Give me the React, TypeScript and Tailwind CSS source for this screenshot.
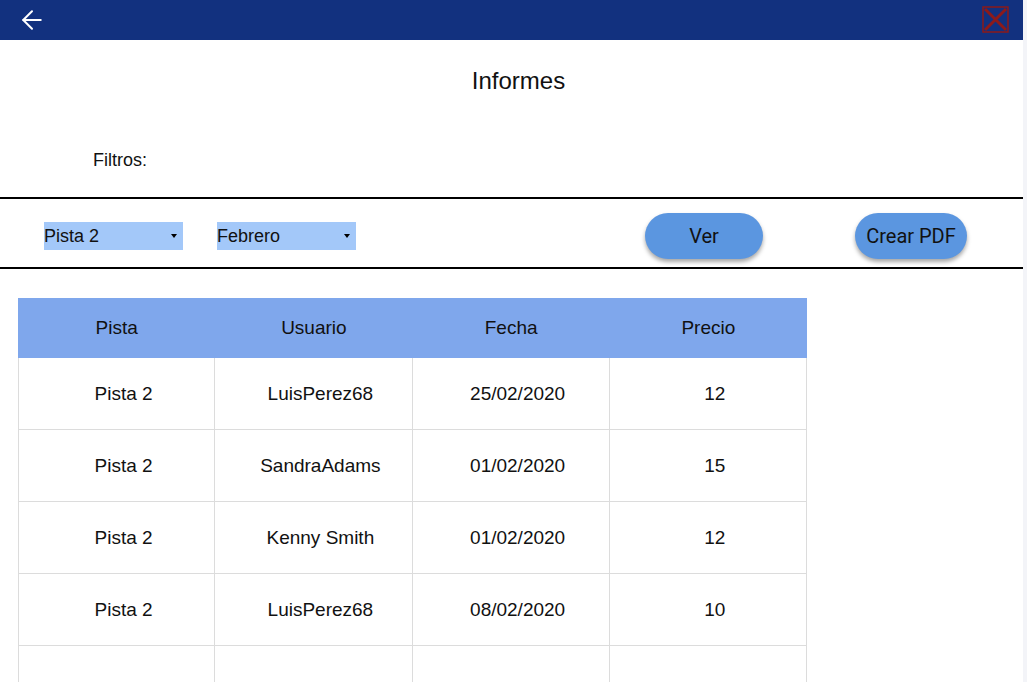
import { ArrowLeft } from "lucide-react"

type Row = { pista: string; usuario: string; fecha: string; precio: string }

const rows: Row[] = [
  { pista: "Pista 2", usuario: "LuisPerez68", fecha: "25/02/2020", precio: "12" },
  { pista: "Pista 2", usuario: "SandraAdams", fecha: "01/02/2020", precio: "15" },
  { pista: "Pista 2", usuario: "Kenny Smith", fecha: "01/02/2020", precio: "12" },
  { pista: "Pista 2", usuario: "LuisPerez68", fecha: "08/02/2020", precio: "10" },
  { pista: "", usuario: "", fecha: "", precio: "" },
]

function Dropdown({ label }: { label: string }) {
  return (
    <div className="flex items-center justify-between w-[139px] h-[28px] bg-[#a3c8f9] pr-[6px] text-[18px] text-[#111]">
      <span>{label}</span>
      <span className="w-0 h-0 border-l-[3px] border-r-[3px] border-t-[4px] border-l-transparent border-r-transparent border-t-black" />
    </div>
  )
}

function CloseIcon() {
  return (
    <svg width="28" height="28" viewBox="0 0 28 28" fill="none">
      <rect x="1" y="1" width="25" height="25" stroke="#8c1a1a" strokeWidth="1.5" />
      <path d="M3 3 L24 24 M24 3 L3 24" stroke="#8c1a1a" strokeWidth="3" />
    </svg>
  )
}

export default function App() {
  return (
    <div className="flex w-[1027px] h-[682px] overflow-hidden bg-white font-['Liberation_Sans',Arial,sans-serif] text-[#111]">
      <div className="w-[1023px] flex flex-col">
        {/* barra superior */}
        <div className="h-10 bg-[#12317f] flex items-center justify-between pl-[17px] pr-[13px] shrink-0">
          <ArrowLeft size={30} strokeWidth={1.6} color="white" />
          <CloseIcon />
        </div>

        {/* titulo y filtros */}
        <div className="h-[157px] flex flex-col shrink-0">
          <h1 className="text-center text-[24px] leading-[28px] mt-[27px] ml-[14px]">Informes</h1>
          <p className="text-[18px] leading-[22px] ml-[93px] mt-[54px]">Filtros:</p>
        </div>

        <div className="h-[72px] border-y-2 border-black flex items-center pl-[44px] pt-[6px] shrink-0">
          <Dropdown label="Pista 2" />
          <div className="ml-[34px]">
            <Dropdown label="Febrero" />
          </div>
          <button className="ml-[289px] w-[118px] h-[46px] rounded-full bg-[#5b96e0] shadow-[0_3px_4px_rgba(0,0,0,0.35)] text-[20px] font-['Roboto',sans-serif] text-[#111]">
            Ver
          </button>
          <button className="ml-[92px] w-[112px] h-[46px] rounded-full bg-[#5b96e0] shadow-[0_3px_4px_rgba(0,0,0,0.35)] text-[20px] font-['Roboto',sans-serif] text-[#111]">
            Crear PDF
          </button>
        </div>

        {/* tabla */}
        <div className="ml-[18px] mt-[29px] w-[789px] text-[19px]">
          <div className="grid grid-cols-4 h-[60px] bg-[#7fa7ec]">
            {["Pista", "Usuario", "Fecha", "Precio"].map((h) => (
              <div key={h} className="flex items-center justify-center">
                {h}
              </div>
            ))}
          </div>
          {rows.map((r, i) => (
            <div key={i} className="grid grid-cols-4 h-[72px] border-b border-[#dcdcdc]">
              {[r.pista, r.usuario, r.fecha, r.precio].map((c, j) => (
                <div
                  key={j}
                  className={`flex items-center justify-center pl-[14px] pt-[2px] border-r border-[#dcdcdc] ${j === 0 ? "border-l" : ""}`}
                >
                  {c}
                </div>
              ))}
            </div>
          ))}
        </div>
      </div>
      <div className="flex-1 bg-[#f3f4f8]" />
    </div>
  )
}
